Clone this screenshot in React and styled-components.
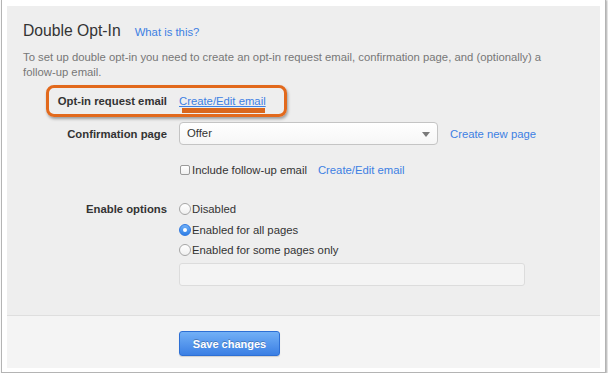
import React from "react";
import styled, { createGlobalStyle } from "styled-components";

const GlobalStyle = createGlobalStyle`
  html, body {
    margin: 0;
    padding: 0;
    background: #ffffff;
  }
  body {
    font-family: "Liberation Sans", Arial, Helvetica, sans-serif;
    color: #333;
  }
`;

const Frame = styled.div`
  width: 605px;
  height: 374px;
  margin: -1px 0 0 1px;
  box-sizing: border-box;
  padding: 6px 4px 4px 5px;
  background: #fff;
  border: 1px solid #b4b4b4;
  box-shadow: 1px 1px 2px rgba(0, 0, 0, 0.35);
  overflow: hidden;
`;

const Panel = styled.div`
  width: 593px;
  height: 362px;
  display: flex;
  flex-direction: column;
  background: #eeeeee;
`;

const Body = styled.div`
  padding: 15px 16px 0 16px;
  height: 310px;
  box-sizing: border-box;
  border-bottom: 1px solid #dedede;
`;

const Footer = styled.div`
  flex: 1;
  background: #f4f4f4;
  padding: 15px 0 0 172px;
  box-sizing: border-box;
`;

const TitleRow = styled.div`
  display: flex;
  align-items: baseline;
  gap: 14px;
  height: 20px;
  line-height: 20px;
`;

const Title = styled.h2`
  margin: 0;
  font-size: 15.7px;
  font-weight: normal;
  color: #333;
`;

const Link = styled.a`
  color: #3d80e3;
  font-size: ${(p) => p.$size || "11.3px"};
  text-decoration: ${(p) => (p.$underline ? "underline" : "none")};
  cursor: pointer;
  white-space: nowrap;
`;

const Description = styled.p`
  margin: 9px 0 0 0;
  font-size: 11.3px;
  line-height: 15px;
  color: #777;
  width: 540px;
`;

const Form = styled.div`
  display: flex;
  flex-direction: column;
  margin-top: 9px;
`;

const Row = styled.div`
  position: relative;
  display: grid;
  grid-template-columns: 144px auto;
  column-gap: 12px;
  align-items: ${(p) => p.$align || "center"};
  height: ${(p) => p.$h || "auto"};
  margin-top: ${(p) => p.$mt || "0"};
`;

const Label = styled.div`
  text-align: right;
  font-size: 11.3px;
  font-weight: bold;
  color: #333;
  white-space: nowrap;
  line-height: ${(p) => p.$lh || "normal"};
`;

const Controls = styled.div`
  display: flex;
  align-items: center;
  gap: ${(p) => p.$gap || "12px"};
`;

const Annotation = styled.div`
  position: absolute;
  left: 23px;
  top: -4px;
  width: 241px;
  height: 32px;
  box-sizing: border-box;
  border: 3px solid #e2691c;
  border-radius: 8px;
  box-shadow: 1px 2px 3px rgba(0, 0, 0, 0.35);
  pointer-events: none;
`;

const Marker = styled.div`
  position: absolute;
  left: 159px;
  top: 19px;
  width: 83px;
  height: 5px;
  background: #d9661c;
`;

const SelectBox = styled.div`
  position: relative;
  width: 259px;
  height: 23px;
  box-sizing: border-box;
  border: 1px solid #c4c4c4;
  border-radius: 4px;
  background: linear-gradient(#ffffff, #f6f6f6);
  font-size: 11.3px;
  line-height: 21px;
  padding-left: 7px;
  color: #333;
`;

const Caret = styled.span`
  position: absolute;
  right: 7px;
  top: 9px;
  width: 0;
  height: 0;
  border-left: 4px solid transparent;
  border-right: 4px solid transparent;
  border-top: 5px solid #7a7a7a;
`;

const Check = styled.span`
  display: inline-block;
  width: 10px;
  height: 10px;
  box-sizing: border-box;
  border: 1px solid #9a9a9a;
  border-radius: 2px;
  background: linear-gradient(#ffffff, #f0f0f0);
  margin: 0 2px 0 1px;
`;

const OptionText = styled.span`
  font-size: 11.3px;
  color: #333;
  white-space: nowrap;
`;

const CheckLabel = styled.label`
  display: flex;
  align-items: center;
`;

const RadioList = styled.div`
  display: flex;
  flex-direction: column;
`;

const RadioItem = styled.label`
  display: flex;
  align-items: center;
  height: 20.5px;
`;

const Radio = styled.span`
  position: relative;
  display: inline-block;
  width: 12px;
  height: 12px;
  box-sizing: border-box;
  border-radius: 50%;
  margin-right: 1px;
  border: 1px solid ${(p) => (p.$on ? "#2f78e0" : "#a6a6a6")};
  background: ${(p) =>
    p.$on
      ? "linear-gradient(#6fb0f8, #2f7fe6)"
      : "linear-gradient(#ffffff, #f0f0f0)"};
  &::after {
    content: "";
    display: ${(p) => (p.$on ? "block" : "none")};
    position: absolute;
    left: 3px;
    top: 3px;
    width: 4px;
    height: 4px;
    border-radius: 50%;
    background: #fff;
  }
`;

const TextField = styled.input`
  display: block;
  width: 346px;
  height: 23px;
  box-sizing: border-box;
  margin-top: 2px;
  border: 1px solid #dcdcdc;
  border-radius: 3px;
  background: #f4f4f4;
  outline: none;
`;

const SaveButton = styled.button`
  width: 101px;
  height: 25px;
  border: 1px solid #2d6fd4;
  border-radius: 3px;
  background: linear-gradient(#72b0f6, #3b7fe4);
  color: #fff;
  font-family: "Liberation Sans", Arial, sans-serif;
  font-size: 11px;
  font-weight: bold;
  text-shadow: 0 -1px 0 rgba(0, 0, 0, 0.25);
  box-shadow: 0 1px 1px rgba(0, 0, 0, 0.15);
  padding: 0;
  cursor: pointer;
`;

export default function App() {
  return (
    <>
      <GlobalStyle />
      <Frame>
        <Panel>
          <Body>
            <TitleRow>
              <Title>Double Opt-In</Title>
              <Link $size="11.3px">What is this?</Link>
            </TitleRow>
            <Description>
              To set up double opt-in you need to create an opt-in request
              email, confirmation page, and (optionally) a follow-up email.
            </Description>
            <Form>
              <Row $h="24px">
                <Label>Opt-in request email</Label>
                <Controls>
                  <Link $underline>Create/Edit email</Link>
                </Controls>
                <Marker />
                <Annotation />
              </Row>
              <Row $h="23px" $mt="9px">
                <Label>Confirmation page</Label>
                <Controls>
                  <SelectBox>
                    Offer
                    <Caret />
                  </SelectBox>
                  <Link>Create new page</Link>
                </Controls>
              </Row>
              <Row $h="20px" $mt="15px">
                <span />
                <Controls $gap="11px">
                  <CheckLabel>
                    <Check />
                    <OptionText>Include follow-up email</OptionText>
                  </CheckLabel>
                  <Link>Create/Edit email</Link>
                </Controls>
              </Row>
              <Row $align="start" $mt="19px">
                <Label $lh="20.5px">Enable options</Label>
                <div>
                  <RadioList>
                    <RadioItem>
                      <Radio />
                      <OptionText>Disabled</OptionText>
                    </RadioItem>
                    <RadioItem>
                      <Radio $on />
                      <OptionText>Enabled for all pages</OptionText>
                    </RadioItem>
                    <RadioItem>
                      <Radio />
                      <OptionText>Enabled for some pages only</OptionText>
                    </RadioItem>
                  </RadioList>
                  <TextField type="text" />
                </div>
              </Row>
            </Form>
          </Body>
          <Footer>
            <SaveButton>Save changes</SaveButton>
          </Footer>
        </Panel>
      </Frame>
    </>
  );
}
